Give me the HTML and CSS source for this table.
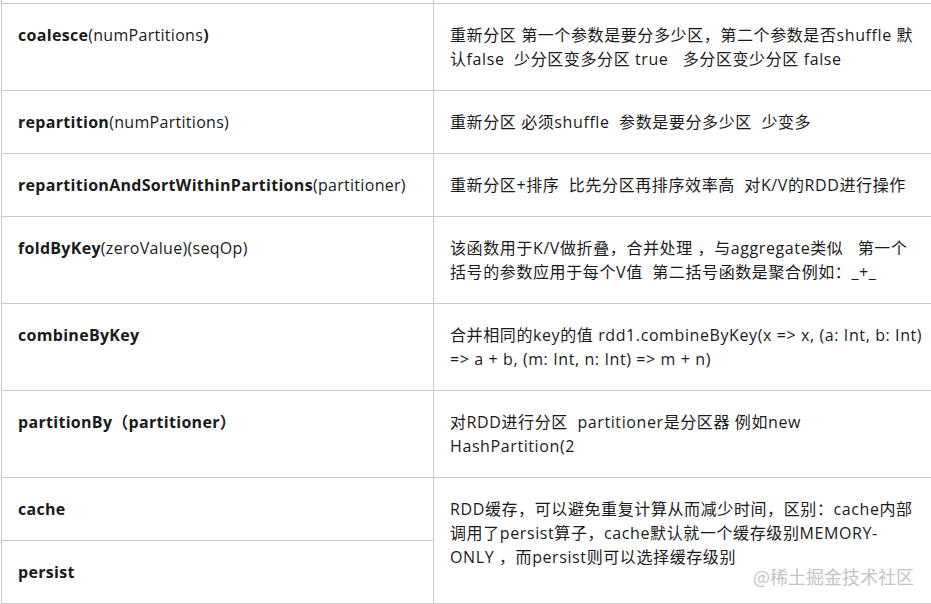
FILE: index.html
```html
<!DOCTYPE html>
<html lang="zh-CN">
<head>
<meta charset="utf-8">
<title>RDD 算子</title>
<link rel="stylesheet" href="styles.css">
</head>
<body>
<div class="page">
  <table class="ops">
    <colgroup>
      <col class="col-name">
      <col class="col-desc">
    </colgroup>
    <tbody>
      <tr class="cut"><td></td><td></td></tr>
      <tr>
        <td class="name"><b>coalesce</b>(numPartitions<b>)</b></td>
        <td class="desc">重新分区 第一个参数是要分多少区，第二个参数是否shuffle 默<br>认false&nbsp; 少分区变多分区 true&nbsp;&nbsp; 多分区变少分区 false</td>
      </tr>
      <tr>
        <td class="name"><b>repartition</b>(numPartitions)</td>
        <td class="desc">重新分区 必须shuffle&nbsp; 参数是要分多少区&nbsp; 少变多</td>
      </tr>
      <tr>
        <td class="name"><b>repartitionAndSortWithinPartitions</b>(partitioner)</td>
        <td class="desc">重新分区+排序&nbsp; 比先分区再排序效率高&nbsp; 对K/V的RDD进行操作</td>
      </tr>
      <tr>
        <td class="name"><b>foldByKey</b>(zeroValue)(seqOp)</td>
        <td class="desc">该函数用于K/V做折叠，合并处理 ，与aggregate类似&nbsp;&nbsp; 第一个<br>括号的参数应用于每个V值&nbsp; 第二括号函数是聚合例如：_+_</td>
      </tr>
      <tr>
        <td class="name"><b>combineByKey</b></td>
        <td class="desc">合并相同的key的值 rdd1.combineByKey(x =&gt; x, (a: Int, b: Int)<br>=&gt; a + b, (m: Int, n: Int) =&gt; m + n)</td>
      </tr>
      <tr>
        <td class="name"><b>partitionBy（partitioner）</b></td>
        <td class="desc">对RDD进行分区&nbsp; partitioner是分区器 例如new<br>HashPartition(2</td>
      </tr>
      <tr>
        <td class="name"><b>cache</b></td>
        <td class="desc" rowspan="2">RDD缓存，可以避免重复计算从而减少时间，区别：cache内部<br>调用了persist算子，cache默认就一个缓存级别MEMORY-<br>ONLY ，而persist则可以选择缓存级别</td>
      </tr>
      <tr>
        <td class="name"><b>persist</b></td>
      </tr>
    </tbody>
  </table>
  <div class="watermark">@稀土掘金技术社区</div>
</div>
</body>
</html>
```

FILE: styles.css
```css
html, body {
  margin: 0;
  padding: 0;
  background: #ffffff;
}

body {
  width: 931px;
  height: 604px;
  overflow: hidden;
}

.page {
  position: relative;
  width: 931px;
  height: 604px;
  overflow: hidden;
}

.ops {
  margin-left: 1px;
  border-collapse: collapse;
  table-layout: fixed;
  width: 960px;
  font-family: "Open Sans", "Noto Sans CJK SC", sans-serif;
  font-size: 16px;
  line-height: 24px;
  color: #1a1a1a;
}

.col-name {
  width: 432px;
}

.col-desc {
  width: 528px;
}

.ops td {
  border: 1px solid #c8c8c8;
  padding: 19px 16px;
  vertical-align: top;
  text-align: left;
  white-space: nowrap;
}

.ops td.name {
  letter-spacing: 0.3px;
}

.ops td.desc {
  letter-spacing: 0.6px;
}

.ops b {
  font-weight: 700;
}

.ops .cut td {
  border-top: none;
  padding: 0;
  height: 3px;
  font-size: 0;
  line-height: 0;
}

.watermark {
  position: absolute;
  left: 753px;
  top: 563px;
  font-family: "Noto Sans CJK SC", sans-serif;
  font-size: 18px;
  line-height: 26px;
  color: #c4c4c4;
  white-space: nowrap;
}
```
